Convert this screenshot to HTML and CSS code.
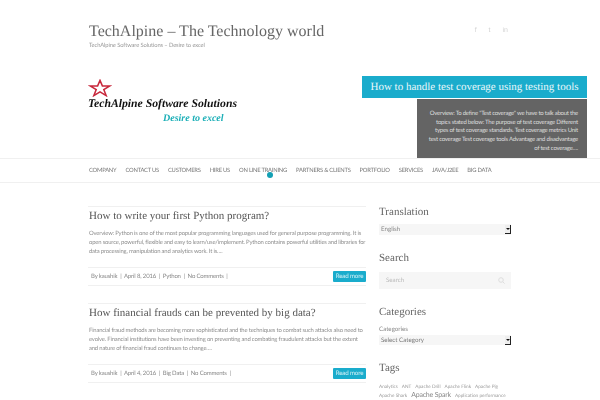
FILE: index.html
```html
<!DOCTYPE html>
<html lang="en">
<head>
<meta charset="utf-8">
<title>TechAlpine</title>
<link rel="stylesheet" href="styles.css">
</head>
<body>
<div class="page">
  <header class="top">
    <div class="brand">
      <h1 class="site-title">TechAlpine – The Technology world</h1>
      <p class="tagline">TechAlpine Software Solutions – Desire to excel</p>
    </div>
    <div class="social">
      <span>f</span><span>t</span><span>in</span>
    </div>
  </header>
  <section class="banner">
    <div class="logo">
      <svg class="star" width="24" height="18" viewBox="0 0 24 19"><polygon points="12,1.5 14.5,7.3 22.5,7.3 16,11.2 18.5,17.5 12,13.5 5.5,17.5 8,11.2 1.5,7.3 9.5,7.3" fill="none" stroke="#c8283c" stroke-width="1.6"/></svg>
      <div class="logo-name">TechAlpine Software Solutions</div>
      <div class="logo-sub">Desire to excel</div>
    </div>
    <div class="slide">
      <div class="slide-title">How to handle test coverage using testing tools</div>
      <div class="slide-text">Overview: To define "Test coverage" we have to talk about the<br>topics stated below: The purpose of test coverage Different<br>types of test coverage standards. Test coverage metrics Unit<br>test coverage Test coverage tools Advantage and disadvantage<br>of test coverage….</div>
    </div>
  </section>
  <nav class="nav">
    <a>COMPANY</a><a>CONTACT US</a><a>CUSTOMERS</a><a>HIRE US</a><a class="has-dot">ON LINE TRAINING<i class="dot"></i></a><a>PARTNERS &amp; CLIENTS</a><a>PORTFOLIO</a><a>SERVICES</a><a>JAVA/J2EE</a><a>BIG DATA</a>
  </nav>
  <div class="columns">
    <main class="posts">
      <article class="post">
        <h2 class="post-title">How to write your first Python program?</h2>
        <p class="excerpt">Overview: Python is one of the most popular programming languages used for general purpose programming. It is<br>open source, powerful, flexible and easy to learn/use/implement. Python contains powerful utilities and libraries for<br>data processing, manipulation and analytics work. It is….</p>
        <div class="meta">
          <span class="meta-text">By kaushik &nbsp;|&nbsp; April 8, 2016 &nbsp;|&nbsp; Python &nbsp;|&nbsp; No Comments &nbsp;|</span>
          <a class="more">Read more</a>
        </div>
      </article>
      <article class="post">
        <h2 class="post-title">How financial frauds can be prevented by big data?</h2>
        <p class="excerpt">Financial fraud methods are becoming more sophisticated and the techniques to combat such attacks also need to<br>evolve. Financial institutions have been investing on preventing and combating fraudulent attacks but the extent<br>and nature of financial fraud continues to change….</p>
        <div class="meta">
          <span class="meta-text">By kaushik &nbsp;|&nbsp; April 4, 2016 &nbsp;|&nbsp; Big Data &nbsp;|&nbsp; No Comments &nbsp;|</span>
          <a class="more">Read more</a>
        </div>
      </article>
    </main>
    <aside class="sidebar">
      <h3 class="widget-title first">Translation</h3>
      <div class="select"><span>English</span><b class="arrow"></b></div>
      <h3 class="widget-title">Search</h3>
      <div class="search"><span>Search</span><svg width="7" height="7" viewBox="0 0 7 7"><circle cx="3" cy="3" r="2.3" fill="none" stroke="#ddd"/><path d="M5 5l1.6 1.6" stroke="#ddd"/></svg></div>
      <h3 class="widget-title">Categories</h3>
      <div class="label">Categories</div>
      <div class="select dark"><span>Select Category</span><b class="arrow"></b></div>
      <h3 class="widget-title">Tags</h3>
      <div class="tags">
        <a>Analytics</a><a>ANT</a><a>Apache Drill</a><a>Apache Flink</a><a>Apache Pig</a><a>Apache Shark</a><a class="big">Apache Spark</a><a>Application performance</a>
      </div>
    </aside>
  </div>
</div>
</body>
</html>
```
FILE: styles.css
```css
html, body { margin: 0; padding: 0; height: 400px; overflow: hidden; background: #fff; }
body { font-family: Lato, "Liberation Sans", sans-serif; color: #888; text-rendering: geometricPrecision; }
h1, h2, h3, p { margin: 0; font-weight: normal; }
.page { width: 600px; height: 400px; overflow: hidden; filter: blur(0.35px); }

.top { display: flex; justify-content: space-between; padding: 22px 92px 0 89px; height: 48px; }
.site-title { font-family: "Liberation Serif", serif; font-size: 16px; line-height: 19px; color: #666; white-space: nowrap; }
.tagline { font-size: 5.8px; line-height: 9px; color: #999; letter-spacing: -0.12px; }
.social { display: flex; gap: 12px; font-family: "Liberation Sans", sans-serif; font-size: 7px; line-height: 18px; color: #d4d4d4; height: 18px; }

.banner { display: flex; justify-content: space-between; height: 88px; padding: 0 13px 0 88px; }
.logo { padding-top: 9px; width: 160px; }
.star { display: block; margin-bottom: 0; }
.logo-name { font-family: "Liberation Serif", serif; font-style: italic; font-weight: bold; font-size: 11.7px; line-height: 13px; color: #111; white-space: nowrap; }
.logo-sub { font-family: "Liberation Serif", serif; font-style: italic; font-weight: bold; font-size: 10px; line-height: 12px; color: #1eb0b8; margin: 3px 0 0 75px; white-space: nowrap; }
.slide { width: 225px; display: flex; flex-direction: column; align-items: flex-end; padding-top: 6px; position: relative; z-index: 1; }
.slide-title { width: 225px; height: 22px; background: #1aaccc; color: #eaf8fb; font-family: "Liberation Serif", serif; font-size: 11px; line-height: 22px; text-align: center; white-space: nowrap; }
.slide-text { width: 170px; box-sizing: border-box; margin-top: 1px; height: 61px; background: #646464; color: #ddd; font-size: 6px; line-height: 8.7px; text-align: right; padding: 11px 9px 0 0; white-space: nowrap; letter-spacing: -0.24px; }

.nav { display: flex; gap: 9px; height: 23px; padding-left: 89px; border-top: 1px solid #f0f0f0; border-bottom: 1px solid #f0f0f0; font-size: 5.8px; line-height: 23px; color: #777; white-space: nowrap; letter-spacing: -0.22px; }
.has-dot { position: relative; }
.dot { position: absolute; left: 28px; top: 13px; width: 6px; height: 6px; border-radius: 50%; background: #13a0b4; }

.columns { display: flex; gap: 13px; padding: 23px 0 0 88px; }
.posts { width: 278px; flex: none; }
.post { border-top: 1px solid #f0f0f0; padding-top: 1px; margin-bottom: 17px; }
.post-title { font-family: "Liberation Serif", serif; font-size: 11px; line-height: 17px; color: #555; white-space: nowrap; padding-left: 1px; }
.excerpt { font-size: 5.9px; line-height: 8.8px; color: #8f8f8f; margin: 5px 0 0 1px; height: 27px; padding-bottom: 10px; white-space: nowrap; letter-spacing: -0.18px; }
.meta { display: flex; justify-content: space-between; align-items: center; height: 17px; border-top: 1px solid #f0f0f0; border-bottom: 1px solid #f0f0f0; font-size: 6px; color: #888; padding-left: 3px; white-space: nowrap; letter-spacing: -0.17px; }
.more { width: 33px; height: 11px; line-height: 11px; border-radius: 1px; background: #1aaccc; color: #d8f2f7; text-align: center; font-size: 6.2px; }

.sidebar { width: 132px; flex: none; margin-top: -1px; }
.widget-title { font-family: "Liberation Serif", serif; font-size: 11px; line-height: 14px; color: #666; margin: 16px 0 7px; }
.widget-title.first { margin: 0 0 5px; }
.select { display: flex; justify-content: space-between; align-items: center; height: 11px; background: #f6f6f6; font-size: 6.2px; color: #888; padding-left: 2px; }
.select.dark { color: #777; height: 10px; margin-top: 1px; }
.arrow { display: block; width: 5px; height: 8px; background: #eee; border-right: 1px solid #222; border-bottom: 1px solid #222; position: relative; }
.arrow::after { content: ""; position: absolute; left: 1px; top: 3px; border: 2px solid transparent; border-top: 2px solid #111; }
.search { display: flex; justify-content: space-between; align-items: center; height: 17px; background: #f6f6f6; font-size: 6.2px; color: #bbb; padding: 0 6px 0 7px; }
.label { font-size: 6.2px; line-height: 8px; color: #888; }
.tags { display: flex; flex-wrap: wrap; align-items: baseline; column-gap: 4px; font-size: 4.7px; line-height: 9px; color: #999; white-space: nowrap; }
.tags .big { font-size: 7px; color: #888; letter-spacing: -0.2px; }
```
